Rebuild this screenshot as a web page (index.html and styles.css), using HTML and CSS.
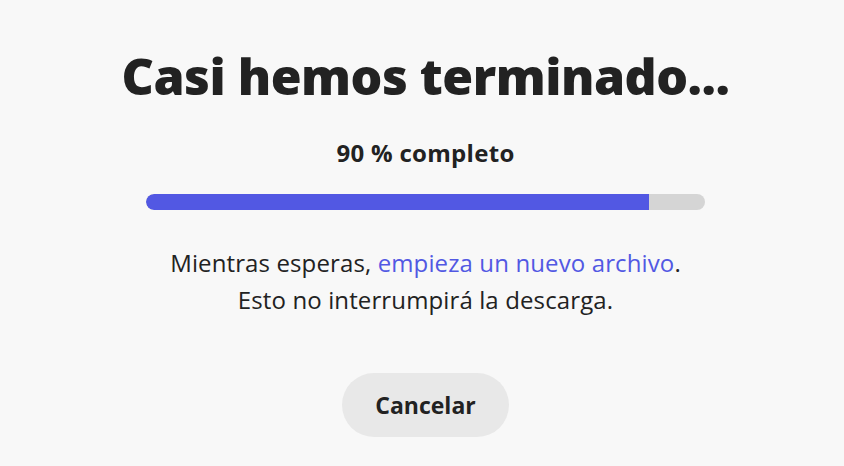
FILE: index.html
```html
<!DOCTYPE html>
<html lang="es">
<head>
<meta charset="utf-8">
<title>Casi hemos terminado</title>
<link rel="stylesheet" href="styles.css">
</head>
<body>
<main class="panel">
  <h1 class="title">Casi hemos terminado...</h1>
  <p class="status">90 % completo</p>
  <div class="track"><div class="fill" style="width: 90%"></div></div>
  <p class="note">Mientras esperas, <a class="link" href="#">empieza un nuevo archivo</a>.<br>Esto no interrumpirá la descarga.</p>
  <button class="cancel" type="button">Cancelar</button>
</main>
</body>
</html>
```

FILE: styles.css
```css
html, body {
  margin: 0;
  padding: 0;
  background: #f8f8f8;
}
body {
  font-family: "Open Sans", "Noto Sans", sans-serif;
  color: #222222;
  height: 466px;
  overflow: hidden;
}
.panel {
  display: flex;
  flex-direction: column;
  align-items: center;
  padding: 44px 0 0 7px;
}
.title {
  margin: 0;
  font-size: 50px;
  font-weight: 800;
  line-height: 64px;
  color: #222222;
  letter-spacing: -0.5px;
}
.status {
  margin: 30px 0 0;
  font-size: 24px;
  font-weight: 700;
  line-height: 30px;
  letter-spacing: 0.3px;
}
.track {
  margin-top: 26px;
  width: 559px;
  height: 16px;
  border-radius: 8px;
  background: #d5d5d5;
  overflow: hidden;
}
.fill {
  height: 100%;
  background: #5258e3;
  border-radius: 8px 0 0 8px;
}
.note {
  margin: 34px 0 0;
  font-size: 24px;
  line-height: 37px;
  letter-spacing: 0.12px;
  text-align: center;
}
.link {
  color: #5258e3;
  text-decoration: none;
}
.cancel {
  margin-top: 55px;
  width: 167px;
  height: 64px;
  border: none;
  border-radius: 32px;
  background: #e8e8e8;
  font-family: inherit;
  font-size: 23px;
  font-weight: 700;
  color: #222222;
}
```
